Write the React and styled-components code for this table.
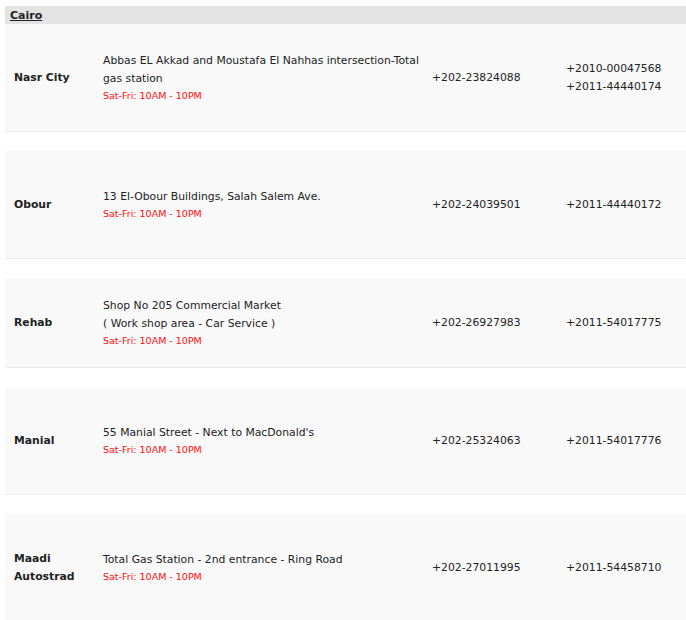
import styled, { createGlobalStyle } from "styled-components";

const GlobalStyle = createGlobalStyle`
  body {
    margin: 0;
    background: #fff;
    font-family: "DejaVu Sans", Verdana, sans-serif;
    color: #222;
  }
`;

const branches = [
  {
    area: "Nasr City",
    address: "Abbas EL Akkad and Moustafa El Nahhas intersection-Total gas station",
    phone: "+202-23824088",
    mobiles: ["+2010-00047568", "+2011-44440174"],
    height: 108,
  },
  {
    area: "Obour",
    address: "13 El-Obour Buildings, Salah Salem Ave.",
    phone: "+202-24039501",
    mobiles: ["+2011-44440172"],
    height: 108,
  },
  {
    area: "Rehab",
    address: ["Shop No 205 Commercial Market", "( Work shop area - Car Service )"],
    phone: "+202-26927983",
    mobiles: ["+2011-54017775"],
    height: 90,
  },
  {
    area: "Manial",
    address: "55 Manial Street - Next to MacDonald's",
    phone: "+202-25324063",
    mobiles: ["+2011-54017776"],
    height: 108,
  },
  {
    area: "Maadi Autostrad",
    address: "Total Gas Station - 2nd entrance - Ring Road",
    phone: "+202-27011995",
    mobiles: ["+2011-54458710"],
    height: 108,
  },
];

const Page = styled.div`
  padding: 6px 0 0 5px;
`;

const CityBar = styled.div`
  height: 18px;
  background: #e3e3e3;
  display: flex;
  align-items: center;
  padding-left: 5px;
`;

const CityName = styled.a`
  font-size: 11px;
  font-weight: bold;
  color: #222;
  text-decoration: underline;
`;

const Row = styled.div`
  display: grid;
  grid-template-columns: 98px 329px 134px 1fr;
  align-items: center;
  min-height: ${(p) => p.$height - 1}px;
  padding-top: 1px;
  box-sizing: border-box;
  background: #f9f9f9;
  border-bottom: 1px solid #ececec;
  margin-bottom: 19px;
  font-size: 10.8px;
  line-height: 18px;
`;

const Area = styled.div`
  padding: 0 10px 0 9px;
  font-weight: bold;
`;

const Address = styled.div`
  padding-right: 4px;
`;

const Hours = styled.div`
  color: #ff0d0d;
  font-size: 9.5px;
  line-height: 16px;
`;

const Phone = styled.div``;

function Branch({ b }) {
  const lines = Array.isArray(b.address) ? b.address : [b.address];
  return (
    <Row $height={b.height + 1}>
      <Area>{b.area}</Area>
      <Address>
        {lines.map((l) => (
          <div key={l}>{l}</div>
        ))}
        <Hours>Sat-Fri: 10AM - 10PM</Hours>
      </Address>
      <Phone>{b.phone}</Phone>
      <Phone>
        {b.mobiles.map((m) => (
          <div key={m}>{m}</div>
        ))}
      </Phone>
    </Row>
  );
}

export default function App() {
  return (
    <Page>
      <GlobalStyle />
      <CityBar>
        <CityName>Cairo</CityName>
      </CityBar>
      {branches.map((b) => (
        <Branch key={b.area} b={b} />
      ))}
    </Page>
  );
}
